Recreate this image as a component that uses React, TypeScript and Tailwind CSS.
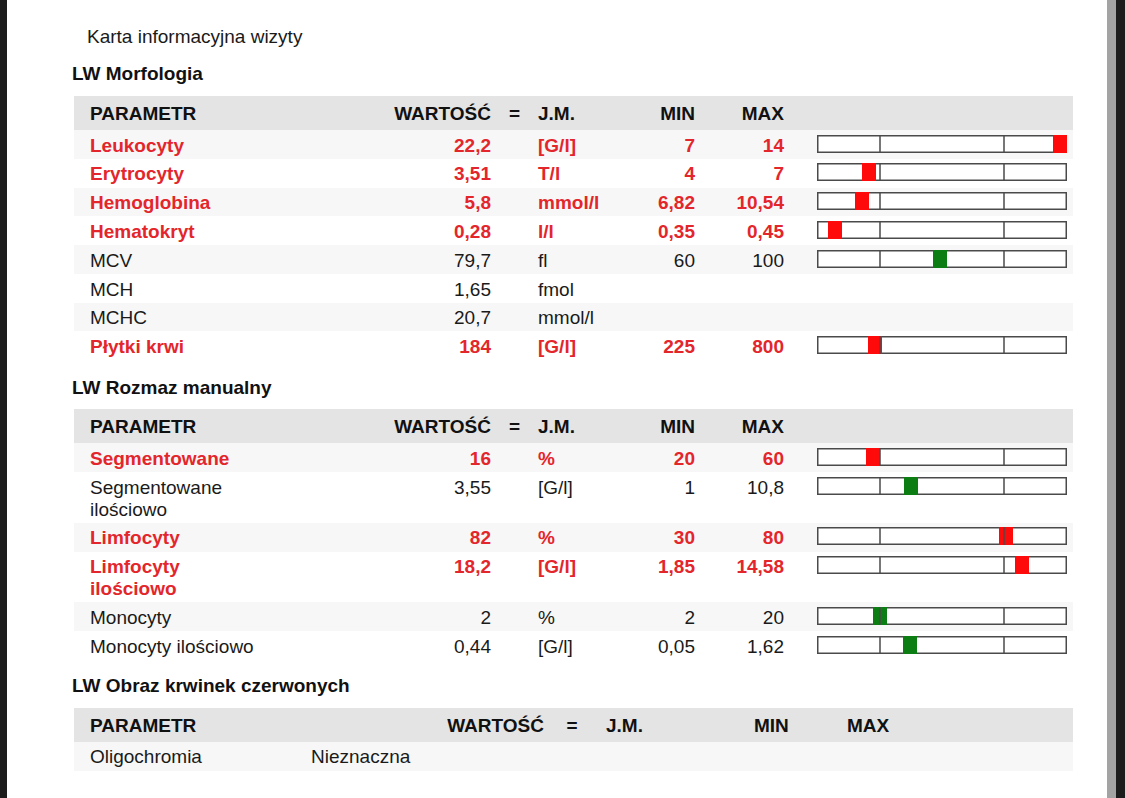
import * as React from "react"

interface LabRow {
  name: string
  value: string
  unit: string
  min?: string
  max?: string
  alert?: boolean
  /** marker centre in px from the left edge of the 250px bar */
  marker?: number
}

const morfologia: LabRow[] = [
  { name: "Leukocyty", value: "22,2", unit: "[G/l]", min: "7", max: "14", alert: true, marker: 243 },
  { name: "Erytrocyty", value: "3,51", unit: "T/l", min: "4", max: "7", alert: true, marker: 52 },
  { name: "Hemoglobina", value: "5,8", unit: "mmol/l", min: "6,82", max: "10,54", alert: true, marker: 45 },
  { name: "Hematokryt", value: "0,28", unit: "l/l", min: "0,35", max: "0,45", alert: true, marker: 18 },
  { name: "MCV", value: "79,7", unit: "fl", min: "60", max: "100", marker: 123 },
  { name: "MCH", value: "1,65", unit: "fmol" },
  { name: "MCHC", value: "20,7", unit: "mmol/l" },
  { name: "Płytki krwi", value: "184", unit: "[G/l]", min: "225", max: "800", alert: true, marker: 58 },
]

const rozmaz: LabRow[] = [
  { name: "Segmentowane", value: "16", unit: "%", min: "20", max: "60", alert: true, marker: 56 },
  { name: "Segmentowane ilościowo", value: "3,55", unit: "[G/l]", min: "1", max: "10,8", marker: 94 },
  { name: "Limfocyty", value: "82", unit: "%", min: "30", max: "80", alert: true, marker: 189 },
  { name: "Limfocyty ilościowo", value: "18,2", unit: "[G/l]", min: "1,85", max: "14,58", alert: true, marker: 205 },
  { name: "Monocyty", value: "2", unit: "%", min: "2", max: "20", marker: 63 },
  { name: "Monocyty ilościowo", value: "0,44", unit: "[G/l]", min: "0,05", max: "1,62", marker: 93 },
]

const font = { fontFamily: '"Liberation Sans", Arial, sans-serif' }
const cols = "grid grid-cols-[188px_229px_47px_82px_75px_89px_1fr]"

// Pasek zakresu: 1/4 poniżej normy, 1/2 norma, 1/4 powyżej
function RangeBar({ marker, alert }: { marker: number; alert?: boolean }) {
  const x = Math.min(Math.max(marker - 7, 0), 236)
  return (
    <svg width={250} height={18} className="block">
      <rect x={0.75} y={0.75} width={248.5} height={16.5} fill="#fff" stroke="#4a4a4a" strokeWidth={1.5} />
      <rect x={x} y={0} width={14} height={18} fill={alert ? "#ff0a0a" : "#0b7d12"} />
      <line x1={63} y1={0} x2={63} y2={18} stroke="#4a4a4a" strokeWidth={1.5} />
      <line x1={187} y1={0} x2={187} y2={18} stroke="#4a4a4a" strokeWidth={1.5} />
    </svg>
  )
}

function HeaderRow() {
  return (
    <div className={`${cols} h-[34px] items-center bg-[#e4e4e4] pt-[2px] font-bold text-[#111]`}>
      <div className="pl-4">PARAMETR</div>
      <div className="text-right">WARTOŚĆ</div>
      <div className="text-center">=</div>
      <div>J.M.</div>
      <div className="text-right">MIN</div>
      <div className="text-right">MAX</div>
      <div />
    </div>
  )
}

function LabTable({ rows }: { rows: LabRow[] }) {
  return (
    <div className="w-[999px] ml-[2px]">
      <HeaderRow />
      {rows.map((r, i) => (
        <div
          key={r.name}
          className={`${cols} pt-[4.6px] pb-[2.2px] leading-[22px] ${i % 2 === 0 ? "bg-[#f7f7f7]" : "bg-white"} ${
            r.alert ? "font-bold text-[#e3262b]" : "text-[#1a1a1a]"
          }`}
        >
          <div className="pl-4">{r.name}</div>
          <div className="text-right">{r.value}</div>
          <div />
          <div>{r.unit}</div>
          <div className="text-right">{r.min}</div>
          <div className="text-right">{r.max}</div>
          <div className="pl-[33px]">
            {r.marker !== undefined && <RangeBar marker={r.marker} alert={r.alert} />}
          </div>
        </div>
      ))}
    </div>
  )
}

export default function App() {
  return (
    <div className="flex h-[798px] w-[1125px] overflow-hidden bg-white text-[19px]" style={font}>
      <div className="w-[7px] shrink-0 bg-[#1c1c1c]" />
      <div className="flex-1 pl-[65px] pt-[26px] leading-[22px]">
        <div className="pl-[15px] text-[#1a1a1a]">Karta informacyjna wizyty</div>

        <h2 className="mt-[15px] font-bold text-[#111]">LW Morfologia</h2>
        <div className="mt-[11px]">
          <LabTable rows={morfologia} />
        </div>

        <h2 className="mt-[17px] font-bold text-[#111]">LW Rozmaz manualny</h2>
        <div className="mt-[10px]">
          <LabTable rows={rozmaz} />
        </div>

        <h2 className="mt-[15px] font-bold text-[#111]">LW Obraz krwinek czerwonych</h2>
        <div className="mt-[11px] w-[999px] ml-[2px]">
          <div className="grid h-[34px] grid-cols-[237px_233px_56px_154px_93px_1fr] items-center bg-[#e4e4e4] pt-[2px] font-bold text-[#111]">
            <div className="pl-4">PARAMETR</div>
            <div className="text-right">WARTOŚĆ</div>
            <div className="text-center">=</div>
            <div className="pl-[6px]">J.M.</div>
            <div>MIN</div>
            <div>MAX</div>
          </div>
          <div className="grid grid-cols-[237px_233px_56px_154px_93px_1fr] bg-[#f7f7f7] pt-[4px] pb-[3px] text-[#1a1a1a]">
            <div className="pl-4">Oligochromia</div>
            <div>Nieznaczna</div>
          </div>
        </div>
      </div>
      <div className="w-[9px] shrink-0 bg-[#a3a3a3]" />
      <div className="w-[9px] shrink-0 bg-[#1c1c1c]" />
    </div>
  )
}
